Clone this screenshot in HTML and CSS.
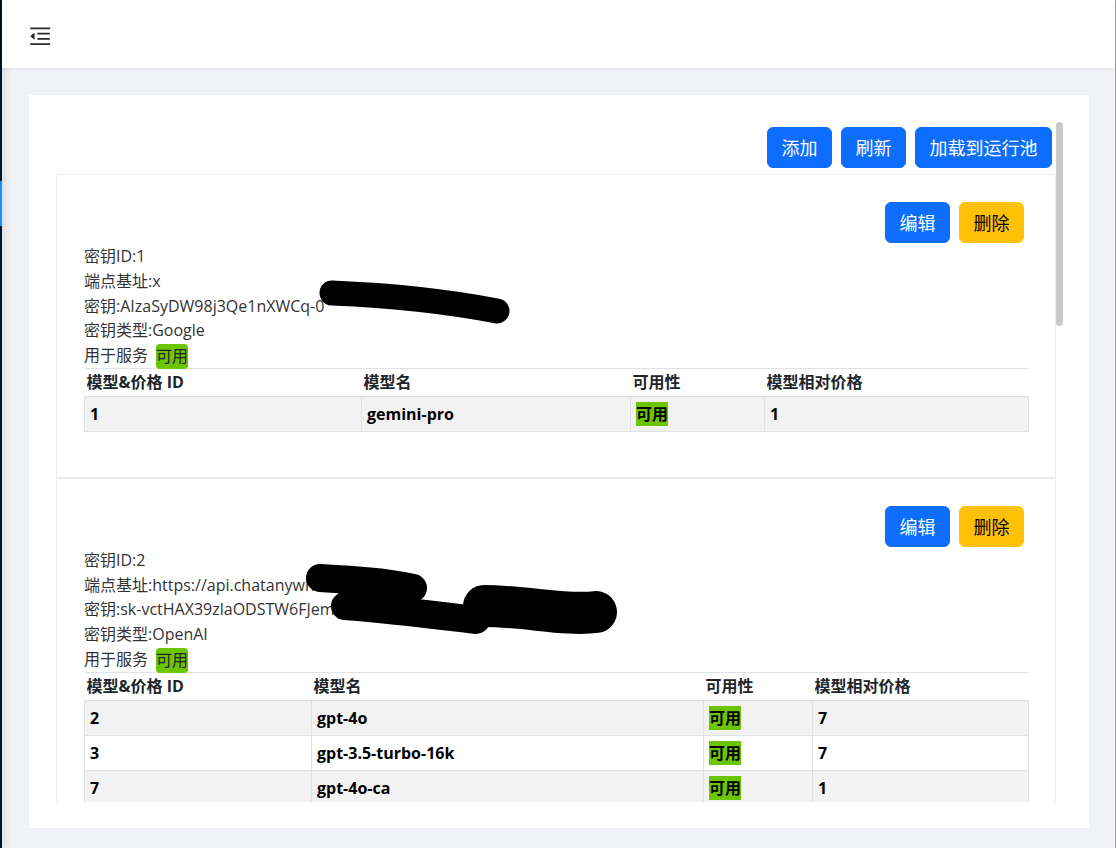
FILE: index.html
```html
<!DOCTYPE html>
<html lang="zh-CN">
<head>
<meta charset="utf-8">
<title>密钥管理</title>
<link rel="stylesheet" href="styles.css">
</head>
<body>
<div class="app">
  <aside class="sider"><div class="sider-selected"></div></aside>
  <div class="main">
    <header class="header">
      <svg class="fold-icon" viewBox="64 64 896 896" aria-hidden="true"><path d="M408 442h480c4.4 0 8-3.6 8-8v-56c0-4.4-3.6-8-8-8H408c-4.4 0-8 3.6-8 8v56c0 4.4 3.6 8 8 8zm-8 204c0 4.4 3.6 8 8 8h480c4.4 0 8-3.6 8-8v-56c0-4.4-3.6-8-8-8H408c-4.4 0-8 3.6-8 8v56zm504-486H120c-4.4 0-8 3.6-8 8v56c0 4.4 3.6 8 8 8h784c4.4 0 8-3.6 8-8v-56c0-4.4-3.6-8-8-8zm0 632H120c-4.4 0-8 3.6-8 8v56c0 4.4 3.6 8 8 8h784c4.4 0 8-3.6 8-8v-56c0-4.4-3.6-8-8-8zM115.4 518.9L271.7 642c5.8 4.6 14.4.5 14.4-6.9V388.9c0-7.4-8.5-11.5-14.4-6.9L115.4 505.1a8.74 8.74 0 000 13.8z"/></svg>
    </header>
    <main class="content">
      <section class="panel">
        <div class="scroll">
          <div class="key-list">
            <div class="toolbar">
              <button class="btn btn-primary">添加</button>
              <button class="btn btn-primary">刷新</button>
              <button class="btn btn-primary">加载到运行池</button>
            </div>

            <div class="key-card">
              <div class="card-actions">
                <button class="btn btn-primary">编辑</button>
                <button class="btn btn-warning">删除</button>
              </div>
              <div class="info">
                <div class="line">密钥ID:1</div>
                <div class="line">端点基址:x</div>
                <div class="line">密钥:AIzaSyDW98j3Qe1nXWCq-0</div>
                <div class="line">密钥类型:Google</div>
                <div class="line">用于服务<span class="badge">可用</span></div>
              </div>
              <table class="models models-a">
                <colgroup><col><col><col><col></colgroup>
                <thead>
                  <tr><th>模型&amp;价格 ID</th><th>模型名</th><th>可用性</th><th>模型相对价格</th></tr>
                </thead>
                <tbody>
                  <tr><td>1</td><td>gemini-pro</td><td><span class="avail">可用</span></td><td>1</td></tr>
                </tbody>
              </table>
              <svg class="redact" width="1000" height="300" aria-hidden="true">
                <path d="M276 119 C324 121 384 126 441 137"/>
              </svg>
            </div>

            <div class="key-card">
              <div class="card-actions">
                <button class="btn btn-primary">编辑</button>
                <button class="btn btn-warning">删除</button>
              </div>
              <div class="info">
                <div class="line">密钥ID:2</div>
                <div class="line">端点基址:https://api.chatanywhere</div>
                <div class="line">密钥:sk-vctHAX39zlaODSTW6FJem</div>
                <div class="line">密钥类型:OpenAI</div>
                <div class="line">用于服务<span class="badge">可用</span></div>
              </div>
              <table class="models models-b">
                <colgroup><col><col><col><col></colgroup>
                <thead>
                  <tr><th>模型&amp;价格 ID</th><th>模型名</th><th>可用性</th><th>模型相对价格</th></tr>
                </thead>
                <tbody>
                  <tr><td>2</td><td>gpt-4o</td><td><span class="avail">可用</span></td><td>7</td></tr>
                  <tr><td>3</td><td>gpt-3.5-turbo-16k</td><td><span class="avail">可用</span></td><td>7</td></tr>
                  <tr><td>7</td><td>gpt-4o-ca</td><td><span class="avail">可用</span></td><td>1</td></tr>
                </tbody>
              </table>
              <svg class="redact" width="1000" height="300" aria-hidden="true">
                <path class="mid" d="M264 100 C300 102 330 104 357 110"/>
                <path class="mid" d="M289 128 C330 131 370 136 420 142"/>
                <path class="wide" d="M428 128 C470 128 510 138 540 134"/>
              </svg>
            </div>
          </div>
        </div>
        <div class="scrollbar"><div class="scrollbar-thumb"></div></div>
      </section>
    </main>
  </div>
</div>
</body>
</html>
```

FILE: styles.css
```css
* { box-sizing: border-box; }

html, body {
  margin: 0;
  padding: 0;
  width: 1116px;
  height: 848px;
  overflow: hidden;
  font-family: "Open Sans", "Noto Sans CJK SC", sans-serif;
}

.app {
  display: flex;
  width: 1116px;
  height: 848px;
  border-right: 1px solid #a3a3a3;
  background: #f0f2f5;
}

.sider {
  width: 2px;
  flex: none;
  background: #001529;
  position: relative;
  z-index: 1;
  box-shadow: 2px 0 7px rgba(0, 21, 41, 0.3);
}

.sider-selected {
  margin-top: 181px;
  height: 45px;
  background: #1890ff;
}

.main {
  flex: 1;
  display: flex;
  flex-direction: column;
  min-width: 0;
}

.header {
  height: 68px;
  flex: none;
  background: #fff;
  position: relative;
  z-index: 2;
  box-shadow: 0 1px 4px rgba(0, 21, 41, 0.08);
  padding: 25px 0 0 26.8px;
}

.fold-icon {
  display: block;
  width: 22.4px;
  height: 22.4px;
  fill: #262626;
}

.content {
  flex: 1;
  min-height: 0;
  display: flex;
  padding: 27px 26px 20px 27px;
}

.panel {
  flex: 1;
  min-width: 0;
  background: #fff;
  padding: 27px 26px 26px 27px;
  display: flex;
}

.scroll {
  flex: 1;
  min-width: 0;
  overflow: hidden;
}

.scrollbar {
  width: 7px;
  flex: none;
}

.scrollbar-thumb {
  width: 7px;
  height: 204px;
  background: #c9c9c9;
  border-radius: 3.5px;
}

.toolbar {
  display: flex;
  justify-content: flex-end;
  gap: 9px;
  padding: 5px 4px 6px 0;
}

.btn {
  font-family: "Noto Sans CJK SC", sans-serif;
  font-size: 18px;
  line-height: 27px;
  padding: 6px 13.5px;
  border: 1px solid transparent;
  border-radius: 6px;
  cursor: pointer;
}

.btn-primary {
  background: #0d6efd;
  border-color: #0d6efd;
  color: #fff;
}

.btn-warning {
  background: #ffc107;
  border-color: #ffc107;
  color: #000;
}

.key-card {
  position: relative;
  border: 1px solid #ececec;
  padding: 27px 26px 29px 27px;
}

.card-actions {
  display: flex;
  justify-content: flex-end;
  gap: 9px;
  padding-right: 5px;
}

.info {
  color: #333;
  font-size: 16px;
  padding-top: 1px;
}

.line {
  height: 24.75px;
  line-height: 24.75px;
  white-space: nowrap;
}

.badge {
  display: inline-block;
  margin-left: 8px;
  background: #6bc500;
  border-radius: 4px;
  line-height: 23px;
  padding: 1px 0;
  vertical-align: middle;
  color: #222;
}

.models {
  width: 100%;
  border-collapse: collapse;
  table-layout: fixed;
  font-size: 16px;
  margin-bottom: 16px;
}

.models th {
  text-align: left;
  font-weight: 700;
  color: #212529;
  line-height: 24px;
  padding: 1px 2px 2px;
  border-top: 1px solid #dee2e6;
}

.models td {
  font-weight: 700;
  color: #000;
  line-height: 24px;
  padding: 5px 5px;
  border: 1px solid #dee2e6;
}

.models tbody tr:nth-child(odd) td {
  background: #f2f2f2;
}

.models-a col:nth-child(1) { width: 277px; }
.models-a col:nth-child(2) { width: 269px; }
.models-a col:nth-child(3) { width: 134px; }

.models-b col:nth-child(1) { width: 227px; }
.models-b col:nth-child(2) { width: 392px; }
.models-b col:nth-child(3) { width: 109px; }

.avail {
  background: #6bc500;
  padding: 1px 0;
}

.redact {
  position: absolute;
  top: -1px;
  left: -1px;
  pointer-events: none;
  overflow: visible;
}

.redact path {
  fill: none;
  stroke: #000;
  stroke-width: 25px;
  stroke-linecap: round;
  stroke-linejoin: round;
}

.redact path.mid {
  stroke-width: 28px;
}

.redact path.wide {
  stroke-width: 42px;
}
```
